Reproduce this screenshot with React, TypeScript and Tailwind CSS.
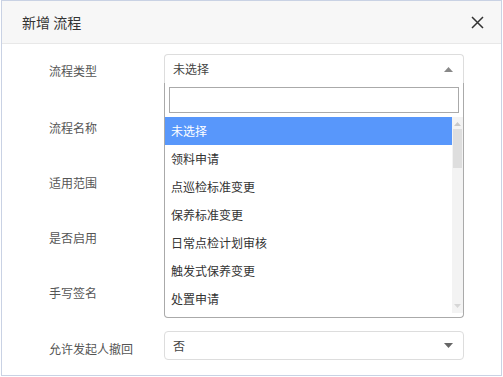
import React from "react";

const options = ["未选择", "领料申请", "点巡检标准变更", "保养标准变更", "日常点检计划审核", "触发式保养变更", "处置申请"];

const labels = ["流程名称", "适用范围", "是否启用", "手写签名"];

export default function App() {
  return (
    <div className="w-[503px] h-[377px] bg-white pl-px" style={{ fontFamily: '"Noto Sans CJK SC", "Noto Sans", sans-serif' }}>
      <div className="relative w-[501px] h-[376px] border border-[#c9d2e4] bg-white">
        {/* header */}
        <div className="flex h-[43px] items-center justify-between border-b border-[#e8e8e8] bg-[#f7f7f7] pl-[20px] pr-[16px]">
          <span className="text-[14px] text-[#333]">新增 流程</span>
          <svg width="13" height="13" viewBox="0 0 13 13" className="mr-px">
            <path d="M1 1 L12 12 M12 1 L1 12" stroke="#333" strokeWidth="1.5" />
          </svg>
        </div>

        {/* body */}
        <div className="pt-[10px]">
          <div className="relative flex h-[29px]">
            <div className="w-[162px] pl-[47px] pt-[8px] text-[12px] leading-[18px] text-[#555]">流程类型</div>
            <div className="flex h-[29px] w-[300px] items-center justify-between rounded-t-[4px] border border-b-0 border-[#ddd] pl-[8px] pr-[10px]">
              <span className="text-[12px] text-[#444]">未选择</span>
              <svg width="9" height="5" viewBox="0 0 9 5">
                <path d="M0 5 L4.5 0 L9 5 Z" fill="#888" />
              </svg>
            </div>

            {/* dropdown */}
            <div className="absolute left-[162px] top-[29px] z-10 h-[235px] w-[300px] rounded-b-[4px] border border-t-0 border-[#aaa] bg-white">
              <div className="px-[4px] pt-[4px] pb-[4px]">
                <div className="h-[26px] border border-[#aaa] bg-white" />
              </div>
              <div className="flex">
                <div className="flex-1">
                  {options.map((o, i) => (
                    <div
                      key={o}
                      className={
                        i === 0
                          ? "flex h-[28px] items-center bg-[#5897fb] pl-[6px] text-[12px] text-white"
                          : "flex h-[28px] items-center pl-[6px] text-[12px] text-[#333]"
                      }
                    >
                      {o}
                    </div>
                  ))}
                </div>
                <div className="flex h-[196px] w-[11px] flex-col items-center bg-[#f3f3f3]">
                  <svg width="7" height="4" viewBox="0 0 7 4" className="mt-[5px]">
                    <path d="M0 4 L3.5 0 L7 4 Z" fill="#c8c8c8" />
                  </svg>
                  <div className="mt-[3px] h-[39px] w-[9px] bg-[#dedede]" />
                  <div className="flex-1" />
                  <svg width="7" height="4" viewBox="0 0 7 4" className="mb-[5px]">
                    <path d="M0 0 L3.5 4 L7 0 Z" fill="#d6d6d6" />
                  </svg>
                </div>
              </div>
            </div>
          </div>

          {labels.map((l) => (
            <div key={l} className="flex h-[55px] items-end">
              <div className="w-[162px] pl-[47px] pb-[1px] text-[12px] leading-[18px] text-[#555]">{l}</div>
            </div>
          ))}

          <div className="mt-[28px] flex h-[29px]">
            <div className="w-[162px] pl-[47px] pt-[9px] text-[12px] leading-[18px] text-[#555]">允许发起人撤回</div>
            <div className="flex h-[29px] w-[300px] items-center justify-between rounded-[4px] border border-[#ddd] pl-[8px] pr-[10px]">
              <span className="text-[12px] text-[#444]">否</span>
              <svg width="9" height="5" viewBox="0 0 9 5">
                <path d="M0 0 L4.5 5 L9 0 Z" fill="#666" />
              </svg>
            </div>
          </div>
        </div>
      </div>
    </div>
  );
}
